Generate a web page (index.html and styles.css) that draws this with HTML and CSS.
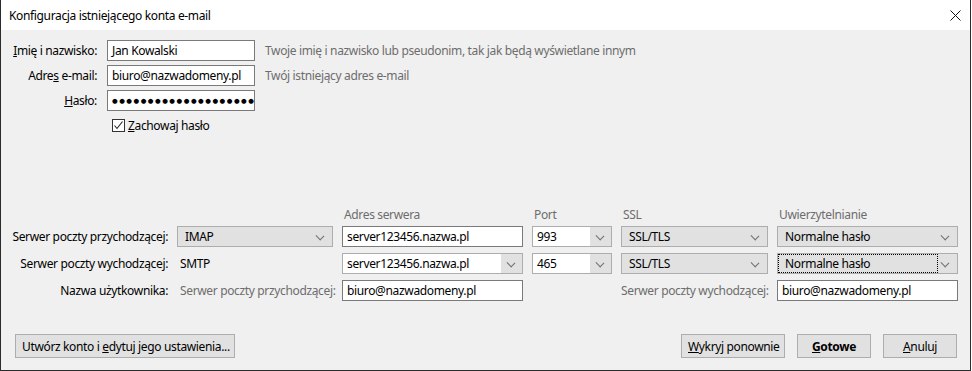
FILE: index.html
```html
<!DOCTYPE html>
<html>

    <head>
        <title>Konfiguracja istniejącego konta e-mail</title>
        <link rel="stylesheet" href="styles.css">
    </head>

    <body>
        <div class="window">
            <div class="titlebar">
                <span class="title">Konfiguracja istniejącego konta e-mail</span>
                <svg class="close" width="11" height="11" viewBox="0 0 11 11">
                    <path d="M0.5 0.5 L10.5 10.5 M10.5 0.5 L0.5 10.5" stroke="#111" stroke-width="1" fill="none"/>
                </svg>
            </div>

            <div class="content">
                <div class="identity">
                    <label class="label"><u>I</u>mię i nazwisko:</label>
                    <div class="field">Jan Kowalski</div>
                    <span class="hint">Twoje imię i nazwisko lub pseudonim, tak jak będą wyświetlane innym</span>

                    <label class="label">Adre<u>s</u> e-mail:</label>
                    <div class="field">biuro@nazwadomeny.pl</div>
                    <span class="hint">Twój istniejący adres e-mail</span>

                    <label class="label"><u>H</u>asło:</label>
                    <div class="field password">●●●●●●●●●●●●●●●●●●●●</div>
                    <span></span>

                    <span></span>
                    <div class="remember">
                        <span class="checkbox">
                            <svg width="11" height="11" viewBox="0 0 11 11">
                                <path d="M1.5 5.5 L4 8.5 L9.5 1.5" stroke="#222" stroke-width="1.1" fill="none"/>
                            </svg>
                        </span>
                        <span><u>Z</u>achowaj hasło</span>
                    </div>
                    <span></span>
                </div>

                <div class="servers-head">
                    <span></span>
                    <span></span>
                    <span class="head">Adres serwera</span>
                    <span class="head">Port</span>
                    <span class="head">SSL</span>
                    <span class="head">Uwierzytelnianie</span>
                </div>

                <div class="servers">
                    <label class="label">Serwer poczty przychodzącej:</label>
                    <div class="select">IMAP<i class="chevron"></i></div>
                    <div class="field dark">server123456.nazwa.pl</div>
                    <div class="combo">993<span class="drop"><i class="chevron"></i></span></div>
                    <div class="select">SSL/TLS<i class="chevron"></i></div>
                    <div class="select">Normalne hasło<i class="chevron"></i></div>

                    <label class="label">Serwer poczty wychodzącej:</label>
                    <span class="plain">SMTP</span>
                    <div class="combo">server123456.nazwa.pl<span class="drop"><i class="chevron"></i></span></div>
                    <div class="combo">465<span class="drop"><i class="chevron"></i></span></div>
                    <div class="select">SSL/TLS<i class="chevron"></i></div>
                    <div class="select focused"><span class="focus-ring">Normalne hasło</span><i class="chevron"></i></div>

                    <label class="label">Nazwa użytkownika:</label>
                    <span class="hint inset">Serwer poczty przychodzącej:</span>
                    <div class="field dark">biuro@nazwadomeny.pl</div>
                    <span></span>
                    <span class="hint right">Serwer poczty wychodzącej:</span>
                    <div class="field dark">biuro@nazwadomeny.pl</div>
                </div>

                <div class="actions">
                    <button class="btn wide">Utwórz konto i <u>e</u>dytuj jego ustawienia...</button>
                    <div class="spacer"></div>
                    <button class="btn retry"><u>W</u>ykryj ponownie</button>
                    <button class="btn bold"><u>G</u>otowe</button>
                    <button class="btn"><u>A</u>nuluj</button>
                </div>
            </div>
        </div>
    </body>

</html>
```

FILE: styles.css
```css
body {
    margin: 0;
    background: #ffffff;
    font-family: "Noto Sans", sans-serif;
    font-size: 12px;
    letter-spacing: -0.35px;
    color: #000;
}

.window {
    width: 971px;
    height: 371px;
    box-sizing: border-box;
    border: 1px solid #2b2b2b;
    border-top: none;
    display: flex;
    flex-direction: column;
}

.titlebar {
    height: 30px;
    background: #fff;
    display: flex;
    align-items: center;
    padding-left: 8px;
    padding-right: 9px;
}

.title {
    flex: 1;
}

.close {
    margin-top: 1px;
}

.content {
    flex: 1;
    background: #f0f0f0;
    display: flex;
    flex-direction: column;
}

.identity {
    display: grid;
    grid-template-columns: 96px 148px 1fr;
    grid-auto-rows: 21px;
    column-gap: 10px;
    row-gap: 4px;
    margin-top: 10px;
    align-items: center;
}

.label {
    text-align: right;
    white-space: nowrap;
}

.hint {
    color: #6d6d6d;
    white-space: nowrap;
}

.hint.inset {
    padding-left: 3px;
}

.hint.right {
    text-align: right;
}

.field {
    height: 21px;
    box-sizing: border-box;
    background: #fff;
    border: 1px solid #7a7a7a;
    padding: 0 4px;
    display: flex;
    align-items: center;
    white-space: nowrap;
    overflow: hidden;
}

.field.password {
    font-family: "DejaVu Sans", sans-serif;
    font-size: 6.5px;
    letter-spacing: 1.5px;
    padding-left: 4px;
}

.remember {
    display: flex;
    align-items: center;
    gap: 3px;
    padding-left: 5px;
}

.checkbox {
    width: 13px;
    height: 13px;
    box-sizing: border-box;
    border: 1px solid #333;
    background: #fff;
    display: flex;
    align-items: center;
    justify-content: center;
}

.servers-head,
.servers {
    display: grid;
    grid-template-columns: 167px 156px 181px 80px 147px 181px;
    column-gap: 9px;
    align-items: center;
}

.servers-head {
    height: 16px;
    margin-top: 71px;
    margin-bottom: 3px;
}

.servers {
    grid-auto-rows: 21px;
    row-gap: 6px;
}

.head {
    color: #6d6d6d;
    padding-left: 2px;
    line-height: 16px;
}

.plain {
    padding-left: 3px;
}

.select {
    height: 21px;
    box-sizing: border-box;
    background: #e1e1e1;
    border: 1px solid #adadad;
    padding-left: 7px;
    display: flex;
    align-items: center;
    position: relative;
    white-space: nowrap;
}

.select.focused {
    padding-left: 0;
}

.focus-ring {
    height: 19px;
    width: 160px;
    box-sizing: border-box;
    border: 1px dotted #000;
    padding-left: 6px;
    display: flex;
    align-items: center;
}

.chevron {
    position: absolute;
    right: 9px;
    top: 6px;
    width: 5px;
    height: 5px;
    border-right: 1px solid #707070;
    border-bottom: 1px solid #707070;
    transform: rotate(45deg) scaleX(1.1);
}

.combo {
    height: 21px;
    box-sizing: border-box;
    background: #fff;
    border: 1px solid #adadad;
    padding-left: 4px;
    display: flex;
    align-items: center;
    position: relative;
    white-space: nowrap;
}

.drop {
    position: absolute;
    right: 0;
    top: 0;
    bottom: 0;
    width: 21px;
    background: #e1e1e1;
}

.drop .chevron {
    right: 8px;
}

.actions {
    display: flex;
    align-items: center;
    margin-top: 33px;
    padding: 0 13px 0 14px;
    gap: 12px;
}

.spacer {
    flex: 1;
}

.btn {
    height: 24px;
    min-width: 74px;
    box-sizing: border-box;
    background: #e1e1e1;
    border: 1px solid #adadad;
    font-family: inherit;
    font-size: 12px;
    letter-spacing: inherit;
    color: #000;
    padding: 0 6px;
    white-space: nowrap;
}

.btn.wide {
    width: 220px;
}

.btn.retry {
    width: 104px;
}

.btn.bold {
    font-weight: bold;
}
```
